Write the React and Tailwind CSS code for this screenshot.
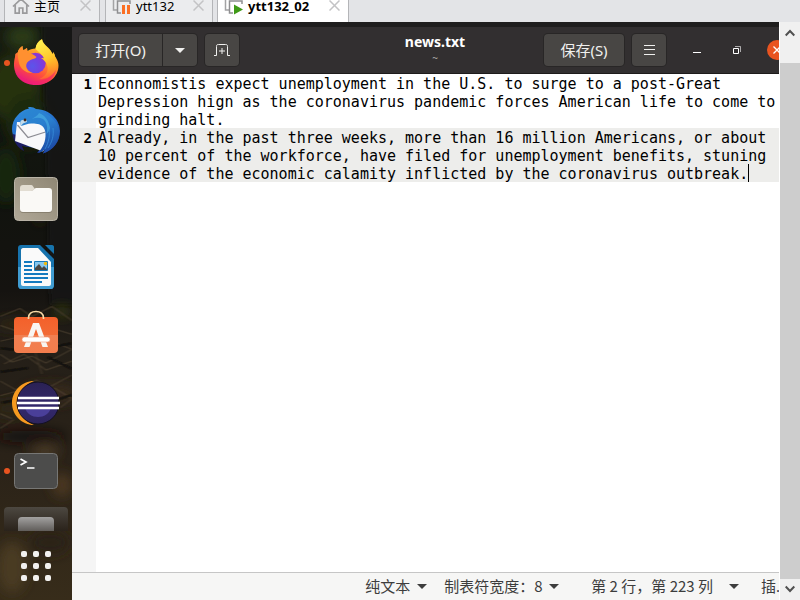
import React, { useState } from "react";

const paragraphs = [
	"Econnomistis expect unemployment in the U.S. to surge to a post-Great Depression hign as the coronavirus pandemic forces American life to come to grinding halt.",
	"Already, in the past three weeks, more than 16 million Americans, or about 10 percent of the workforce, have filed for unemployment benefits, stuning evidence of the economic calamity inflicted by the coronavirus outbreak.",
];
const caretColumn = 72;

const headerButton =
	"h-8 flex items-center justify-center bg-[#484644] text-[#f0f0ee] shadow-[0_0_0_1px_#282626] hover:bg-[#555350]";

const HomeIcon = () => (
	<svg width="18" height="18" viewBox="0 0 18 18" fill="none" stroke="#9a9a9c" strokeWidth="1.7">
		<path d="M1 9.5 9 2l8 7.5M3.2 8v8.2h4V11h3.6v5.2h4V8" />
	</svg>
);

const MachineIcon = ({ running }) => (
	<svg width="20" height="20" viewBox="0 0 20 20" fill="none">
		<path d="M5 14H1.500V1H15v3" stroke="#a3a3a5" strokeWidth="1.5" />
		<path d="M9 17H5.500V5H18v3" stroke="#8f8f91" strokeWidth="1.5" />
		{running ? (
			<path d="M10 8.5 19 13.500l-9 5z" fill="#3f9a17" />
		) : (
			<path d="M10 9h3v9h-3zM15 9h3v9h-3z" fill="#fb6f24" />
		)}
	</svg>
);

const Tab = ({ icon, label, active, className }) => (
	<div
		className={`h-8 flex shrink-0 items-center border-x border-[#b4b5b8] pr-1 ${
			active ? "bg-white font-bold" : "bg-[#ebecee]"
		} ${className}`}>
		{icon}
		<button className="ml-1 flex-1 text-left leading-3 whitespace-nowrap">{label}</button>
		<button aria-label={`close ${label}`} className="p-1 pb-1.5">
			<svg width="11" height="11" viewBox="0 0 11 11" stroke="#c3c3c5" strokeWidth="1.5">
				<path d="M.5.5l10 10M10.500.5l-10 10" />
			</svg>
		</button>
	</div>
);

const FirefoxIcon = () => (
	<svg width="72" height="68" viewBox="0 0 72 68">
		<defs>
			<linearGradient id="fxBody" x1=".8" y1="0" x2=".3" y2="1">
				<stop offset="0" stopColor="#ffe040" />
				<stop offset=".4" stopColor="#ff9a26" />
				<stop offset=".72" stopColor="#ff4c3d" />
				<stop offset="1" stopColor="#e3128b" />
			</linearGradient>
			<linearGradient id="fxTail" x1=".4" y1="0" x2=".7" y2="1">
				<stop offset="0" stopColor="#fff04f" />
				<stop offset=".5" stopColor="#ffc72c" />
				<stop offset="1" stopColor="#ff8a22" stopOpacity=".2" />
			</linearGradient>
			<radialGradient id="fxGlobe" cx=".35" cy=".65" r=".7">
				<stop offset="0" stopColor="#5b55ea" />
				<stop offset=".6" stopColor="#7540e0" />
				<stop offset="1" stopColor="#9433cc" />
			</radialGradient>
		</defs>
		<circle cx="7" cy="35" r="3" fill="#e95420" />
		<path
			d="M18 24c.3-2.300 2-4.500 4.500-6 0 1.800.3 3 1 4.200l3.500-2.200.5 3c2-1.500 5-2.500 8-2.500.5-4 2.500-7.500 6.500-9.500.5 3.500 3 5.500 6 8.500 2 2 3.500 4 4.500 6.500l1-2c.8 1.500 1.300 3 1.500 4.500 2.300 3 3.500 6 3.500 9 0 11.500-10 19.500-22.500 19.500S14 48.500 14 37c0-3 .3-5.500 1-8l.3-3z"
			fill="url(#fxBody)"
		/>
		<circle cx="35.500" cy="35" r="10.300" fill="url(#fxGlobe)" />
		<path
			d="M35.500 21c.5-4 2.500-7.500 6.500-9.500.5 3.500 3 5.500 6 8.500 2 2 3.500 4 4.500 6.500l1-2c3 6 4 12 2 17-3 6-9 10-16 9.500 7-3 9.500-8.500 7.500-14-1-3-3.500-5.500-6-7l3 .3c-1.500-3.500-4.500-5.800-8.500-9.300z"
			fill="url(#fxTail)"
		/>
		<path
			d="M18 24c.3-2.300 2-4.500 4.500-6 0 1.800.3 3 1 4.200l3.500-2.200.5 4.500c3 .7 6 1.700 9 4.500-1 2-4 1.700-6 3-2.300 1.300-4.500 3-4.300 6 .2 3.500 2.800 6 6.800 7-8 .5-13-5-14-10-.7-3.500-1.500-7-1-11z"
			fill="#ff9030"
		/>
		<path d="M15 43c4 7 11 10 20 10s17-4 21-11c-2 9-10 15-20 15s-19-5-21-14z" fill="#f31e73" opacity=".6" />
	</svg>
);

const ThunderbirdIcon = () => (
	<svg width="72" height="68" viewBox="0 0 72 68">
		<defs>
			<linearGradient id="tbBody" x1=".3" y1="0" x2=".7" y2="1">
				<stop offset="0" stopColor="#2f8bdc" />
				<stop offset=".5" stopColor="#236ac9" />
				<stop offset="1" stopColor="#232a86" />
			</linearGradient>
			<linearGradient id="tbWing" x1=".2" y1="0" x2=".6" y2="1">
				<stop offset="0" stopColor="#2a86d2" />
				<stop offset=".4" stopColor="#2a7fd0" />
				<stop offset="1" stopColor="#1c4aa5" />
			</linearGradient>
		</defs>
		<path
			d="M17 20c3-4 7-6.500 12-7.500l-1-1.200c3-1 6 0 8 1.700 14 .5 24 11 24 22 0 11-7 19-17 22.500l2-4c-3 1.500-6 3-8 3.500l3-4-16-3c-7-3-12-9-12-17 0-5 2-10 5-13z"
			fill="url(#tbBody)"
		/>
		<path d="M12.500 38c1 7 5 14 11.500 17l-2-5 7 1-12-12z" fill="#1c1d63" />
		<path d="M17 26 46 27v19c0 4-1 7-3 9.500L15 45z" fill="#f8f8fa" />
		<path d="M17.500 29 28 41.500 45.500 36" fill="none" stroke="#8c8c94" strokeWidth="1.200" />
		<path
			d="M21 30c-2-6 0-12 5-15 5-3 13-1.500 18 2 8 3 14 10 15.500 18 0 11-6 19-16.500 22.500l2-4c-2 1.500-4.500 3-7 3.500 4.500-5 8-11 7.500-20-.5-5-3.500-8.500-8-9-5-.5-8-1-11.500.5z"
			fill="url(#tbWing)"
		/>
		<path d="M28 25c4-3 10-4.500 15-2 4 3 5 9 3.500 15 2-2 3-4 3.500-6-1-7-5-13-11-15-1 3-6 5-11 8z" fill="#4eb6e6" opacity=".55" />
		<path d="M49 31c1 8 0 15-4 22M53 32c1 8-1 14-5 20" fill="none" stroke="#3a93dd" opacity=".7" />
		<path d="M21 30c-1-2-1-4 0-5.500l5-1.500 1 3-4 1.500z" fill="#c3dbea" />
		<circle cx="25" cy="24" r="1.400" fill="#3d2419" />
	</svg>
);

const FilesIcon = () => (
	<svg width="72" height="68" viewBox="0 0 72 68">
		<defs>
			<linearGradient id="files" x1="1" y1="0" x2="0" y2="1">
				<stop offset="0" stopColor="#8f8775" />
				<stop offset="1" stopColor="#b0a897" />
			</linearGradient>
		</defs>
		<rect x="14.500" y="13.500" width="43" height="43" rx="4" fill="url(#files)" stroke="#b9b3a6" />
		<path d="M20 24c0-2 1-3 3-3h8c2 0 2 2 4 4l2 4H20z" fill="#e2ddd2" />
		<path d="M20 27h11c3 0 3-3 5-3h13c2 0 3 1 3 3v19c0 2-1 3-3 3H23c-2 0-3-1-3-3z" fill="#6d6656" opacity=".5" />
		<path d="M20 27h11c3 0 3-3 5-3h13c2 0 3 1 3 3v18c0 2-1 3-3 3H23c-2 0-3-1-3-3z" fill="#faf9f6" />
	</svg>
);

const WriterIcon = () => (
	<svg width="72" height="68" viewBox="0 0 72 68">
		<path d="M21 13h19l14 14v26c0 2-1 4-3 4H21c-2 0-3-2-3-4V16c0-2 1-3 3-3z" fill="#1773ad" />
		<path d="M18 35h36v18c0 2-1 4-3 4H21c-2 0-3-2-3-4z" fill="#409cd1" />
		<path d="M23 16h15l13 14v22c0 1-1 2-2 2H23c-1 0-2-1-2-2V18c0-1 1-2 2-2z" fill="#fafafa" />
		<path d="M45 13h7c1.500 0 2 1 2 2v7z" fill="#1774ad" />
		<path d="M24 30h8M24 34h8M24 38h8M24 42h24M24 46h24M24 50h18" stroke="#147abf" strokeWidth="2" />
		<path d="M34.500 29.500h13v9h-13z" fill="#87c7ef" stroke="#1679b8" />
		<path d="M35 38v-2l4-4 3 4 2-2 3 3v1z" fill="#4a4743" />
		<circle cx="45.500" cy="31.500" r="1.700" fill="#f2b90c" />
	</svg>
);

const SoftwareIcon = () => (
	<svg width="72" height="68" viewBox="0 0 72 68">
		<defs>
			<linearGradient id="software" x1="0" y1="0" x2="0" y2="1">
				<stop offset="0" stopColor="#f4602a" />
				<stop offset=".49" stopColor="#f26a35" />
				<stop offset=".5" stopColor="#f17f51" />
				<stop offset="1" stopColor="#f37d4d" />
			</linearGradient>
		</defs>
		<rect x="14" y="17" width="44" height="36" rx="4" fill="url(#software)" />
		<path d="M28.500 19v-1c0-4 3-6.500 7.500-6.500s7.500 2.500 7.500 6.500v1" fill="none" stroke="#f8d9a6" strokeWidth="1.700" />
		<path d="M33 23h6l9 24h-5.500L36 29l-6.500 18H24z" fill="#f8f5f2" />
		<rect x="22" y="37" width="28" height="5" rx="2.500" fill="#fff" stroke="#ef9876" strokeWidth=".6" />
	</svg>
);

const EclipseIcon = () => (
	<svg width="72" height="68" viewBox="0 0 72 68">
		<defs>
			<linearGradient id="eclipse" x1="0" y1="0" x2="0" y2="1">
				<stop offset="0" stopColor="#2a2153" />
				<stop offset=".6" stopColor="#33286c" />
				<stop offset="1" stopColor="#2d245c" />
			</linearGradient>
		</defs>
		<path d="M34 13c-12 0-22 10-22 22s10 22 22 22c-9-3-16-12-16-22s7-19 16-22z" fill="#f79a20" />
		<circle cx="38" cy="35" r="21" fill="url(#eclipse)" stroke="#131024" />
		<path d="M25 40h26c-2 6-7 9-13 9s-11-3-13-9z" fill="#4a3f99" />
		<path d="M18 30h41M17 35h43M18 40h41" stroke="#fff" strokeWidth="2.300" />
	</svg>
);

const TerminalIcon = () => (
	<svg width="72" height="68" viewBox="0 0 72 68">
		<circle cx="7" cy="35" r="3" fill="#e95420" />
		<rect x="14.500" y="17.500" width="43" height="35" rx="4" fill="#4c4c4b" stroke="#777775" />
		<path d="M20.500 23l5.500 3-5.500 3" fill="none" stroke="#fff" strokeWidth="1.700" />
		<path d="M27 32h7.500" stroke="#fff" strokeWidth="1.500" />
	</svg>
);

// Blurry night forest behind the dock
const Wallpaper = () => (
	<svg className="absolute inset-0 size-full" viewBox="0 0 72 578" preserveAspectRatio="none">
		<defs>
			<linearGradient id="ground" x1="0" y1="0" x2="0" y2="1">
				<stop offset="0" stopColor="#161b12" />
				<stop offset=".3" stopColor="#11130e" />
				<stop offset=".46" stopColor="#151310" />
				<stop offset=".56" stopColor="#241f18" />
				<stop offset=".75" stopColor="#2a2218" />
				<stop offset="1" stopColor="#372c1a" />
			</linearGradient>
			<filter id="soft" x="-50%" y="-50%" width="200%" height="200%">
				<feGaussianBlur stdDeviation="6" />
			</filter>
			<filter id="edge" x="-50%" y="-10%" width="200%" height="120%">
				<feGaussianBlur stdDeviation="2" />
			</filter>
			<filter id="fine" x="-10%" y="-10%" width="120%" height="120%">
				<feGaussianBlur stdDeviation=".8" />
			</filter>
		</defs>
		<rect width="72" height="578" fill="url(#ground)" />
		<g filter="url(#soft)">
			<ellipse cx="22" cy="10" rx="16" ry="12" fill="#2c3b18" />
			<ellipse cx="14" cy="62" rx="26" ry="34" fill="#25300f" />
			<ellipse cx="28" cy="95" rx="22" ry="26" fill="#1f2b10" />
			<ellipse cx="6" cy="150" rx="14" ry="28" fill="#182611" />
			<ellipse cx="40" cy="185" rx="5" ry="14" fill="#2a2415" />
		</g>
		<path d="M42-5h35v285H50L46 120z" fill="#151616" opacity=".85" filter="url(#edge)" />
		<g filter="url(#soft)">
			<ellipse cx="62" cy="287" rx="7" ry="5" fill="#3c4716" />
			<ellipse cx="20" cy="300" rx="26" ry="7" fill="#2e2619" />
			<ellipse cx="50" cy="370" rx="30" ry="10" fill="#372b1b" />
			<ellipse cx="10" cy="385" rx="18" ry="8" fill="#2f2618" />
			<ellipse cx="45" cy="428" rx="14" ry="7" fill="#4a3a25" />
			<ellipse cx="62" cy="462" rx="10" ry="12" fill="#4b3920" />
			<ellipse cx="12" cy="545" rx="15" ry="26" fill="#4a3a20" />
			<ellipse cx="50" cy="520" rx="20" ry="12" fill="#2b2114" />
			<ellipse cx="30" cy="413" rx="36" ry="6" fill="#120f0b" />
		</g>
		<g filter="url(#fine)" fill="none" strokeWidth="1.200" opacity=".75">
			<path
				d="M0 292l20-8 12 8 20-10 20 14M0 317l18-4 16 10 16-6 22 8M4 340l20-10 22 16 26-9M0 357l16 9 20-10 14 7 22-12M0 405l14-9M42 350l-8-26M60 384l12-9"
				stroke="#4c3f2e"
			/>
			<path d="M0 301l24 8 12-10 36 11M0 330l12 8 20-6 14 7 26-14M0 372l18-5M54 364l18 11M0 390l12 5" stroke="#65563f" opacity=".6" />
			<path d="M0 324l30 3 42-8M0 348l28-4M48 333l24 12M2 379l20-4 10 10 40-14" stroke="#0d0b08" strokeWidth="2.500" />
		</g>
	</svg>
);

const Triangle = ({ className }) => (
	<svg width="10" height="5" viewBox="0 0 10 5" fill="currentColor" className={`pointer-events-none shrink-0 ${className || ""}`}>
		<path d="M0 0h10L5 5z" />
	</svg>
);

const StatusSelect = ({ name, label, value }) => (
	<label className="flex items-center shrink-0 whitespace-nowrap">
		{label}
		<select aria-label={name} className="appearance-none bg-transparent pr-4 outline-none">
			<option>{value}</option>
		</select>
		<Triangle className="-ml-2.5" />
	</label>
);

const ScrollArrow = ({ label, up, className }) => (
	<button aria-label={label} className={`flex justify-center ${className}`}>
		<svg width="10" height="8" viewBox="0 0 10 8" fill="none" stroke="#505050" strokeWidth="2">
			<path d={up ? "M.7 6.500 5 2l4.300 4.500" : "M.7 1.500 5 6l4.300-4.500"} />
		</svg>
	</button>
);

const Dock = () => (
	<nav className="relative w-[72px] shrink-0 overflow-hidden bg-[#15130f]">
		<Wallpaper />
		<div className="relative flex flex-col items-center pt-px">
			{[
				["Firefox", FirefoxIcon],
				["Thunderbird", ThunderbirdIcon],
				["文件", FilesIcon],
				["LibreOffice Writer", WriterIcon],
				["Ubuntu Software", SoftwareIcon],
				["Eclipse", EclipseIcon],
				["终端", TerminalIcon],
			].map(([name, Icon]) => (
				<button key={name} aria-label={name}>
					<Icon />
				</button>
			))}
			<div className="mt-[3px] flex h-6 w-16 items-end justify-center rounded-t bg-linear-to-b from-[#4d4841] to-[#2a231b]">
				<div className="h-3.5 w-9 rounded-t bg-linear-to-b from-[#a3a2a1] to-[#605d5a]" />
			</div>
			<button aria-label="显示应用程序" className="mt-5 grid grid-cols-3 gap-1.5">
				{[...Array(9)].map((_, i) => (
					<span key={i} className="size-1.5 rounded-[2px] bg-[#f2f1ef]" />
				))}
			</button>
		</div>
	</nav>
);

const HeaderBar = () => (
	<header className="-mr-5 grid h-[47px] shrink-0 grid-cols-[1fr_auto_1fr] items-center border-b border-[#1d1b1b] bg-[#322f30] pl-[7px] pr-3 text-[15px]">
		<div className="flex items-center">
			<button className={`${headerButton} w-[83px] rounded-l`}>打开(O)</button>
			<button aria-label="最近打开的文件" className={`${headerButton} ml-px w-[34px] rounded-r`}>
				<Triangle />
			</button>
			<button aria-label="新建标签页" className={`${headerButton} ml-2 w-[34px] rounded`}>
				<svg width="16" height="14" viewBox="0 0 16 14" fill="none" stroke="currentColor">
					<path d="M0 12.500h2.500v-9c0-1.500.5-2 2-2h7c1.500 0 2 .5 2 2v9H16M8 5v6M5 8h6" />
				</svg>
			</button>
		</div>
		<div className="flex flex-col items-center pl-1 text-white">
			<h1 className="text-[14px] leading-4 font-bold">news.txt</h1>
			<span className="text-[10px] leading-4 text-[#a8a6a4]">~</span>
		</div>
		<div className="flex items-center justify-end text-white">
			<button className={`${headerButton} w-20 rounded`}>保存(S)</button>
			<button aria-label="菜单" className={`${headerButton} ml-2 w-[34px] rounded`}>
				<svg width="11" height="10" viewBox="0 0 11 10" stroke="currentColor">
					<path d="M0 .5h11M0 4.500h11M0 9.500h11" />
				</svg>
			</button>
			<button aria-label="最小化" className="ml-[27px]">
				<svg width="8" height="8" viewBox="0 0 8 8" stroke="currentColor">
					<path d="M0 6.500h8" />
				</svg>
			</button>
			<button aria-label="还原" className="ml-8">
				<svg width="8" height="8" viewBox="0 0 8 8" fill="none" stroke="currentColor">
					<path d="M2 .5h5.500V6" opacity=".6" />
					<path d="M.5 2.500h5v5h-5z" />
				</svg>
			</button>
			<button aria-label="关闭" className="ml-[26px] flex size-5 items-center justify-center rounded-full bg-[#e95420]">
				<svg width="8" height="8" viewBox="0 0 8 8" stroke="currentColor" strokeWidth="1.300">
					<path d="M.5.5l7 7M7.500.5l-7 7" />
				</svg>
			</button>
		</div>
	</header>
);

const Editor = () => {
	const [text, setText] = useState(paragraphs.join("\n"));

	return (
		<div className="grid min-h-0 flex-1 grid-cols-[24px_1fr] grid-rows-1 bg-white font-['DejaVu_Sans_Mono',monospace] text-[15px] leading-[18px] text-black">
			<div className="col-start-1 row-start-1 bg-[#f5f5f5]" />
			<div className="col-span-2 col-start-1 row-start-1">
				<div className="h-[54px] w-5 pt-px text-right text-[14px] font-bold">1</div>
				<div className="relative h-[54px] bg-[#ededeb]">
					<div className="w-5 pt-px text-right text-[14px] font-bold">2</div>
					<div className="absolute inset-y-0 left-[26px] flex items-end">
						<span className="h-[18px] w-px bg-black" style={{ marginLeft: `${caretColumn}ch` }} />
					</div>
				</div>
			</div>
			<textarea
				aria-label="news.txt"
				spellCheck={false}
				value={text}
				onChange={(event) => setText(event.target.value)}
				className="relative col-start-2 row-start-1 resize-none overflow-hidden bg-transparent pt-px pl-0.5 outline-none"
			/>
		</div>
	);
};

const App = () => {
	return (
		<div
			lang="zh-CN"
			className="flex h-screen flex-col overflow-hidden bg-white font-['Noto_Sans','Noto_Sans_CJK_SC',sans-serif]">
			<div className="flex h-[22px] shrink-0 items-end overflow-hidden bg-[#e3e4e7] pl-1 text-[13px] text-black">
				<Tab icon={<HomeIcon />} label="主页" className="w-24 pl-[7px]" />
				<Tab icon={<MachineIcon />} label="ytt132" className="ml-[5px] w-[108px] pl-1.5" />
				<Tab icon={<MachineIcon running />} label="ytt132_02" active className="ml-1 w-[132px] pl-1.5" />
			</div>
			<div className="flex min-h-0 flex-1">
				<div className="flex min-w-0 flex-1 flex-col overflow-hidden">
					<div className="h-[5px] shrink-0 bg-[#1f1e1e]" />
					<div className="flex min-h-0 flex-1">
						<Dock />
						<main className="flex min-w-0 flex-1 flex-col overflow-hidden">
							<HeaderBar />
							<Editor />
							<footer className="flex h-7 shrink-0 items-center justify-end overflow-hidden border-t border-[#c6c6c6] bg-[#f6f6f5] font-['Noto_Sans_CJK_SC',sans-serif] text-[15px] text-[#3d3d3d]">
								<StatusSelect name="语言" value="纯文本" />
								<span className="w-[17px]" />
								<StatusSelect name="制表符宽度" label="制表符宽度：" value="8" />
								<button className="ml-8 flex shrink-0 items-center gap-4 whitespace-nowrap">
									第 2 行，第 223 列
									<Triangle />
								</button>
								<span className="ml-[22px] w-[18px] shrink-0 overflow-hidden font-['Noto_Sans','Noto_Sans_CJK_SC',sans-serif] whitespace-nowrap">
									插…
								</span>
							</footer>
						</main>
					</div>
				</div>
				<div className="ml-px flex w-5 shrink-0 flex-col bg-[#f0f0f0]">
					<ScrollArrow label="向上滚动" up className="h-[41px] pt-[7px]" />
					<div className="flex-1 bg-[#cdcdcd]" />
					<ScrollArrow label="向下滚动" className="h-[21px] pt-[6px]" />
				</div>
			</div>
		</div>
	);
};

export default App;
